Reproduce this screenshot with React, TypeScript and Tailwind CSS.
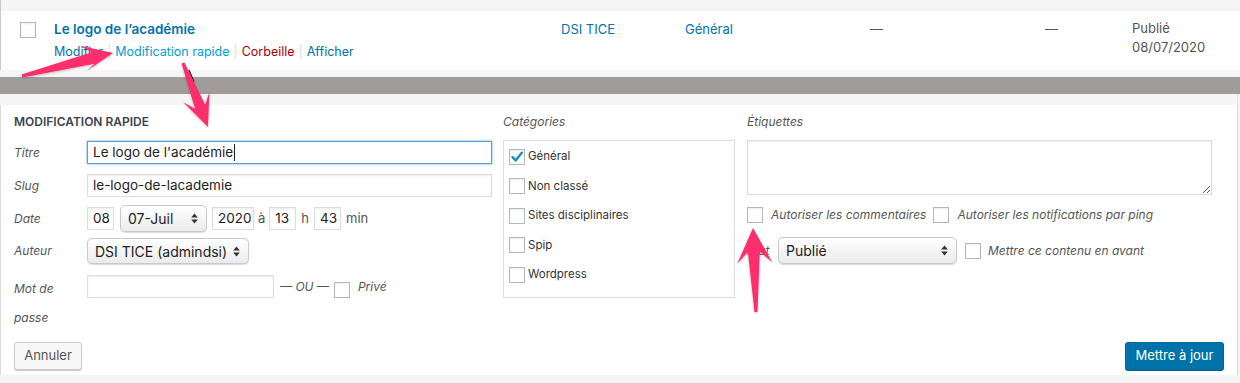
import React from "react";

const Checkbox = ({ checked = false }: { checked?: boolean }) => (
  <div className="w-4 h-4 shrink-0 border border-[#b4b9be] bg-white shadow-[inset_0_1px_2px_rgba(0,0,0,0.08)] flex items-center justify-center">
    {checked && (
      <svg width="14" height="14" viewBox="0 0 14 14">
        <path d="M2.5 7.2 L5.6 10.4 L11.8 2.8" fill="none" stroke="#1e8cbe" strokeWidth="2.4" strokeLinecap="round" strokeLinejoin="round" />
      </svg>
    )}
  </div>
);

const UpDown = () => (
  <svg width="7" height="11" viewBox="0 0 7 11" className="shrink-0">
    <path d="M3.5 0.5 L6.8 4.5 L0.2 4.5 Z" fill="#333" />
    <path d="M3.5 10.5 L6.8 6.5 L0.2 6.5 Z" fill="#333" />
  </svg>
);

const Select = ({ text, w, h = "h-[27px]" }: { text: string; w: string; h?: string }) => (
  <div
    className={`${w} ${h} shrink-0 rounded-[5px] border border-[#c9c9c9] bg-linear-to-b from-white to-[#ebebeb] shadow-[0_1px_1px_rgba(0,0,0,0.15)] flex items-center justify-between pl-[7px] pr-[8px] text-[14px] text-[#222]`}
  >
    <span>{text}</span>
    <UpDown />
  </div>
);

const Input = ({ value, w, focus = false }: { value: string; w: string; focus?: boolean }) => (
  <div
    className={`${w} h-[23px] shrink-0 bg-white flex items-center px-[5px] text-[13.5px] text-[#222] ${
      focus ? "border border-[#5b9dd9] shadow-[0_0_2px_rgba(30,140,190,0.8)]" : "border border-[#ddd] shadow-[inset_0_1px_2px_rgba(0,0,0,0.07)]"
    }`}
  >
    {value}
    {focus && <span className="w-px h-[17px] bg-[#222] ml-px" />}
  </div>
);

function arrowPts(tx: number, ty: number, px: number, py: number, hl: number, hw1: number, hw2: number, sw: number) {
  const dx = px - tx, dy = py - ty;
  const L = Math.hypot(dx, dy);
  const ux = dx / L, uy = dy / L;
  const nx = -uy, ny = ux;
  const bx = px - ux * hl, by = py - uy * hl;
  const kx = px - ux * hl * 0.68, ky = py - uy * hl * 0.68;
  const pts = [
    [tx + nx * 1.5, ty + ny * 1.5],
    [kx + nx * sw, ky + ny * sw],
    [bx + nx * hw1, by + ny * hw1],
    [px, py],
    [bx - nx * hw2, by - ny * hw2],
    [kx - nx * sw, ky - ny * sw],
    [tx - nx * 1.5, ty - ny * 1.5],
  ];
  return pts.map((p) => `${p[0].toFixed(1)},${p[1].toFixed(1)}`).join(" ");
}

export default function App() {
  const cats = ["Général", "Non classé", "Sites disciplinaires", "Spip", "Wordpress"];
  return (
    <div className="w-[1240px] h-[383px] bg-[#f5f5f5] relative overflow-hidden font-['Inter',sans-serif] text-[#555]">
      {/* list row */}
      <div className="border-l border-[#c9c9c9]">
        <div className="h-[11px]" />
        <div className="h-[59px] bg-white flex pt-[8px]">
          <div className="w-[53px] pl-[19px] pt-[3px] shrink-0">
            <Checkbox />
          </div>
          <div className="w-[507px] shrink-0">
            <div className="text-[13.5px] font-semibold leading-[20px] text-[#0073aa]">Le logo de l’académie</div>
            <div className="mt-[4px] leading-[18px] text-[12.5px] flex items-center">
              <span className="text-[#0073aa]">Modifier</span>
              <span className="text-[#ddd] mx-[4px]">|</span>
              <span className="text-[#00a0d2]">Modification rapide</span>
              <span className="text-[#ddd] mx-[4px]">|</span>
              <span className="text-[#a00]">Corbeille</span>
              <span className="text-[#ddd] mx-[4px]">|</span>
              <span className="text-[#0073aa]">Afficher</span>
            </div>
          </div>
          <div className="w-[124px] shrink-0 text-[13px] leading-[20px] text-[#0073aa]">DSI TICE</div>
          <div className="w-[185px] shrink-0 text-[13px] leading-[20px] text-[#0073aa]">Général</div>
          <div className="w-[175px] shrink-0 text-[13px] leading-[20px] text-[#555]">—</div>
          <div className="w-[87px] shrink-0 text-[13px] leading-[20px] text-[#555]">—</div>
          <div className="text-[13px] leading-[19px] text-[#555]">
            <div>Publié</div>
            <div>08/07/2020</div>
          </div>
        </div>
      </div>
      <div className="h-[7px]" />
      <div className="h-[17px] bg-[#9f9c9b]" />
      <div className="h-[11px] w-[1238px] border-r border-[#e2e2e2]" />

      {/* quick edit panel */}
      <div className="h-[270px] w-[1238px] bg-white border-l border-r border-[#dcdcdc] flex flex-col pl-[13px] pr-[13px] pt-[10px] pb-[5px]">
        <div className="flex">
          {/* left column */}
          <div className="w-[478px] shrink-0">
            <div className="h-[14px] leading-[14px] text-[12px] font-semibold text-[#3c434a] mb-[12px]">MODIFICATION RAPIDE</div>
            <div className="flex items-center h-[23px]">
              <div className="w-[73px] italic text-[12px]">Titre</div>
              <Input value="Le logo de l'académie" w="w-[405px]" focus />
            </div>
            <div className="flex items-center h-[23px] mt-[10px]">
              <div className="w-[73px] italic text-[12px]">Slug</div>
              <Input value="le-logo-de-lacademie" w="w-[405px]" />
            </div>
            <div className="flex items-center h-[23px] mt-[10px] text-[13px]">
              <div className="w-[73px] italic text-[12px]">Date</div>
              <Input value="08" w="w-[27px]" />
              <div className="ml-[6px]">
                <Select text="07-Juil" w="w-[87px]" />
              </div>
              <div className="ml-[5px]">
                <Input value="2020" w="w-[42px]" />
              </div>
              <span className="mx-[4px]">à</span>
              <Input value="13" w="w-[27px]" />
              <span className="mx-[5px]">h</span>
              <Input value="43" w="w-[27px]" />
              <span className="ml-[5px]">min</span>
            </div>
            <div className="flex items-center h-[26px] mt-[8px]">
              <div className="w-[73px] italic text-[12px]">Auteur</div>
              <Select text="DSI TICE (admindsi)" w="w-[162px]" h="h-[26px]" />
            </div>
            <div className="flex items-start mt-[11px]">
              <div className="w-[73px] pr-[14px] italic text-[12px] leading-[29px] -mt-[1px]">Mot de passe</div>
              <div className="flex items-center h-[23px] text-[12px]">
                <Input value="" w="w-[187px]" />
                <span className="ml-[6px] italic">— OU —</span>
                <div className="ml-[5px] self-end">
                  <Checkbox />
                </div>
                <span className="ml-[8px] italic">Privé</span>
              </div>
            </div>
          </div>

          {/* categories */}
          <div className="w-[232px] ml-[11px] shrink-0">
            <div className="h-[14px] leading-[14px] italic text-[12px] mb-[11px]">Catégories</div>
            <div className="h-[158px] border border-[#ddd] pl-[5px] pt-[1px]">
              {cats.map((c, i) => (
                <div key={c} className="h-[29.5px] flex items-center">
                  <Checkbox checked={i === 0} />
                  <span className="ml-[3px] text-[11.5px] text-[#333]">{c}</span>
                </div>
              ))}
            </div>
          </div>

          {/* tags */}
          <div className="w-[465px] ml-[12px] shrink-0">
            <div className="h-[14px] leading-[14px] italic text-[12px] mb-[11px]">Étiquettes</div>
            <textarea
              readOnly
              className="block w-[465px] h-[55px] border border-[#ddd] shadow-[inset_0_1px_2px_rgba(0,0,0,0.07)] outline-none resize-y bg-white"
            />
            <div className="flex items-center h-[16px] mt-[12px] text-[12px] italic">
              <Checkbox />
              <span className="ml-[8px]">Autoriser les commentaires</span>
              <div className="ml-[7px]">
                <Checkbox />
              </div>
              <span className="ml-[8px]">Autoriser les notifications par ping</span>
            </div>
            <div className="flex items-center h-[27px] mt-[14px] text-[12px]">
              <div className="w-[31px] italic">État</div>
              <Select text="Publié" w="w-[179px]" />
              <div className="ml-[8px]">
                <Checkbox />
              </div>
              <span className="ml-[7px] italic">Mettre ce contenu en avant</span>
            </div>
          </div>
        </div>

        <div className="mt-auto flex justify-between items-end">
          <div className="w-[68px] h-[28px] rounded-[3px] border border-[#ccc] bg-[#f7f7f7] shadow-[0_1px_0_#ccc] flex items-center justify-center text-[13px] text-[#555]">
            Annuler
          </div>
          <div className="w-[99px] h-[28px] rounded-[3px] border border-[#006799] bg-[#0073aa] shadow-[0_1px_0_#006799] flex items-center justify-center text-[13px] text-white">
            Mettre à jour
          </div>
        </div>
      </div>

      {/* annotation arrows */}
      <svg className="absolute inset-0 pointer-events-none" width="1240" height="383" viewBox="0 0 1240 383">
        <defs>
          <filter id="sh" x="-20%" y="-20%" width="140%" height="140%">
            <feDropShadow dx="0" dy="1" stdDeviation="1" floodColor="#000" floodOpacity="0.25" />
          </filter>
        </defs>
        <line x1="189" y1="70" x2="194" y2="82" stroke="#111" strokeWidth="1.2" />
        <g fill="#fd2d6c" filter="url(#sh)">
          <polygon points={arrowPts(22, 76, 113, 53, 30, 11, 15, 6)} />
          <polygon points={arrowPts(183, 63, 208, 127, 32, 14, 14, 5.5)} />
          <polygon points={arrowPts(756, 312, 753, 228, 35, 18, 17, 6)} />
        </g>
      </svg>
    </div>
  );
}
